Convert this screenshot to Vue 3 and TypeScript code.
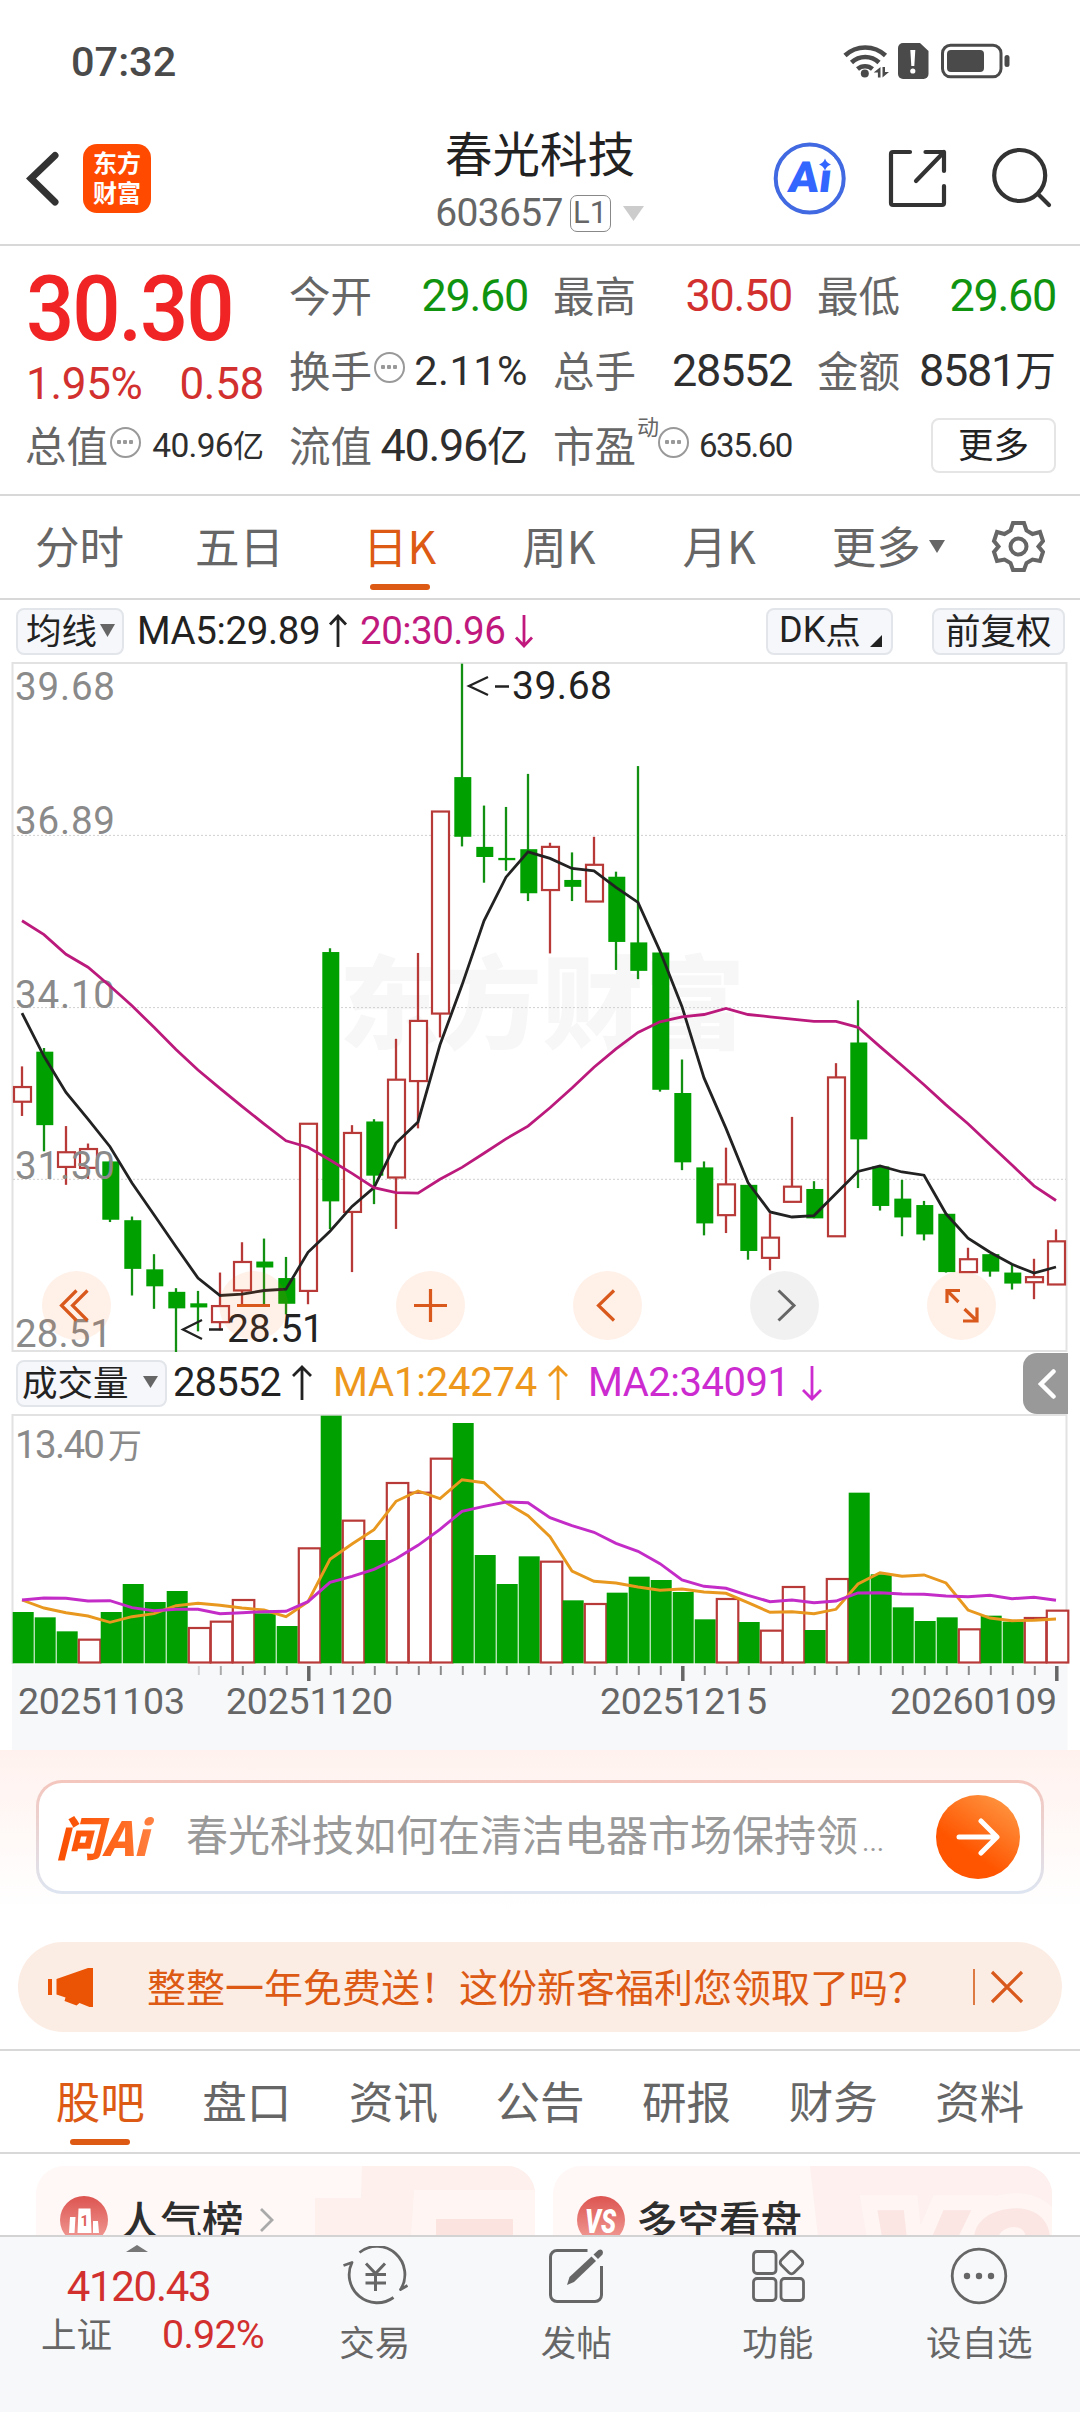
<script setup lang="ts">
type Candle = [kind: 'r' | 'g', high: number, top: number, bottom: number, low: number]

const STEP = 22
const FIRST = 22
const cx = (i: number): number => FIRST + i * STEP
const py = (v: number): number => 660 + v * 0.45918
const vy = (v: number): number => 1340 + v / 3

const candles: Candle[] = [
  ['r', 885, 930, 962, 993], ['g', 845, 853, 1013, 1070], ['r', 1015, 1072, 1104, 1143], ['r', 1053, 1065, 1106, 1130],
  ['g', 1090, 1092, 1219, 1224], ['g', 1212, 1220, 1326, 1384], ['g', 1294, 1327, 1364, 1413], ['g', 1368, 1376, 1412, 1507],
  ['g', 1374, 1401, 1410, 1462], ['r', 1334, 1407, 1442, 1460], ['r', 1268, 1311, 1373, 1403], ['g', 1260, 1310, 1323, 1403],
  ['g', 1300, 1346, 1402, 1425], ['r', 1010, 1010, 1374, 1403], ['g', 628, 636, 1179, 1239], ['r', 1013, 1030, 1202, 1333],
  ['g', 1000, 1005, 1123, 1185], ['r', 825, 914, 1127, 1239], ['r', 638, 786, 917, 1020], ['r', 330, 330, 770, 822],
  ['g', 8, 255, 385, 406], ['g', 317, 407, 429, 485], ['g', 320, 431, 436, 459], ['g', 248, 412, 508, 525],
  ['r', 398, 407, 501, 639], ['g', 419, 479, 494, 525], ['r', 385, 446, 526, 526], ['g', 461, 472, 614, 675],
  ['g', 231, 615, 677, 695], ['g', 637, 637, 936, 940], ['g', 870, 943, 1094, 1111], ['g', 1092, 1105, 1227, 1253],
  ['r', 1062, 1142, 1209, 1248], ['g', 1143, 1143, 1287, 1306], ['r', 1205, 1258, 1302, 1329], ['r', 995, 1147, 1180, 1180],
  ['g', 1135, 1152, 1216, 1216], ['r', 878, 909, 1255, 1255], ['g', 741, 833, 1044, 1150], ['g', 1100, 1103, 1189, 1199],
  ['g', 1132, 1173, 1214, 1255], ['g', 1178, 1187, 1251, 1264], ['g', 1206, 1206, 1333, 1334], ['r', 1280, 1305, 1333, 1333],
  ['g', 1294, 1294, 1332, 1343], ['g', 1315, 1334, 1358, 1371], ['r', 1304, 1344, 1355, 1392], ['r', 1240, 1266, 1360, 1360],
]

const ma5 = [769, 863, 942, 1000, 1060, 1139, 1208, 1278, 1346, 1384, 1381, 1373, 1370, 1290, 1244, 1190, 1149, 1052, 1006, 838, 708, 568, 473, 418, 432, 454, 459, 495, 528, 634, 755, 910, 1020, 1138, 1202, 1213, 1210, 1162, 1114, 1102, 1115, 1122, 1206, 1259, 1290, 1316, 1335, 1322]
const ma20 = [568, 598, 641, 669, 710, 753, 800, 848, 893, 933, 972, 1010, 1047, 1061, 1089, 1118, 1149, 1160, 1161, 1131, 1105, 1074, 1043, 1015, 975, 932, 887, 847, 811, 788, 777, 772, 759, 772, 777, 782, 787, 787, 800, 842, 883, 925, 969, 1010, 1055, 1100, 1145, 1177]
const volumes = [816, 832, 874, 899, 816, 732, 786, 753, 864, 845, 780, 820, 858, 625, 227, 542, 600, 429, 458, 356, 249, 645, 732, 649, 665, 781, 792, 758, 710, 720, 756, 838, 777, 846, 872, 741, 870, 717, 458, 703, 802, 843, 832, 868, 827, 845, 834, 812]
const vma1 = [780, 804, 818, 828, 847, 830, 821, 797, 790, 796, 804, 810, 830, 785, 658, 612, 569, 484, 453, 476, 419, 428, 488, 527, 590, 693, 724, 729, 741, 751, 747, 756, 760, 788, 817, 815, 821, 808, 732, 698, 709, 705, 729, 810, 834, 842, 841, 837]
const vma2 = [780, 774, 775, 783, 782, 803, 812, 808, 808, 821, 818, 815, 814, 785, 727, 709, 688, 656, 616, 568, 514, 499, 486, 488, 533, 557, 577, 610, 634, 671, 720, 739, 745, 766, 785, 780, 788, 783, 759, 758, 762, 763, 768, 770, 766, 776, 772, 781]

// Volume bars are coloured by the close-to-close change, so a few differ from their candle.
const flipped = [0, 2, 8]
const volDown = (i: number): boolean => (candles[i][0] === 'g') !== flipped.includes(i)

const line = (data: number[], f: (v: number) => number): string =>
  data.map((v, i) => `${cx(i)},${f(v).toFixed(1)}`).join(' ')

const priceLabels = [
  { t: '39.68', y: 700, w: 100 }, { t: '36.89', y: 834, w: 100 }, { t: '34.10', y: 1007.5, w: 100 },
  { t: '31.30', y: 1179, w: 100 }, { t: '28.51', y: 1347, w: 97 },
]
const gridLines = [835.4, 1007.6, 1179.3]
const ticks = Array.from({ length: 40 }, (_, k) => k + 8)
const isMajor = (i: number): boolean => i === 13 || i === 30 || i === 47
const dates = [
  { t: '20251103', x: 18 }, { t: '20251120', x: 226 }, { t: '20251215', x: 600 }, { t: '20260109', x: 890 },
]
const periods = ['分时', '五日', '日K', '周K', '月K', '更多']
const sections = ['股吧', '盘口', '资讯', '公告', '研报', '财务', '资料']
</script>

<template>
  <div class="screen">
    <div class="status">
      <span class="clock">07:32</span>
      <svg class="status-icons" width="170" height="40" viewBox="842 40 170 40">
        <g fill="none" stroke="#4a4a4a" stroke-width="4.6">
          <path d="M845 55.500a29.500 29.500 0 0 1 40.500 0" />
          <path d="M851.500 62.500a20 20 0 0 1 27.500 0" />
          <path d="M857.500 69a11.500 11.500 0 0 1 15 0" />
        </g>
        <circle cx="864.800" cy="73.500" r="4" fill="#4a4a4a" />
        <path d="M880.500 67v10.500h-2.600V72.500h-4.200zM882.500 77.500V67h2.500v5h4z" fill="#4a4a4a" />
        <path d="M903 43h17l8.500 8V74a5 5 0 0 1-5 5H903a5 5 0 0 1-5-5V48a5 5 0 0 1 5-5z" fill="#4a4a4a" />
        <path d="M910.300 50h5l-1 16h-3z" fill="#fff" />
        <circle cx="912.800" cy="71" r="2.600" fill="#fff" />
        <rect x="942.500" y="45.300" width="58.500" height="31.500" rx="8" fill="none" stroke="#4a4a4a" stroke-width="3" />
        <rect x="947" y="50" width="37" height="22" rx="4" fill="#4a4a4a" />
        <rect x="1004.500" y="55" width="5" height="12" rx="2.500" fill="#4a4a4a" />
      </svg>
    </div>

    <header class="header">
      <svg class="back" width="34" height="60" viewBox="26 149 34 60">
        <path d="M55 155.500L31 178.500L55 202" fill="none" stroke="#333" stroke-width="7" stroke-linecap="round" />
      </svg>
      <div class="brand"><span>东方</span><span>财富</span></div>
      <div class="title">
        <div class="name">春光科技</div>
        <div class="code">
          <span class="num">603657</span><span class="level">L1</span>
          <svg width="23" height="15" viewBox="0 0 23 15"><path d="M1 0h21L11.500 15z" fill="#ccc" /></svg>
        </div>
      </div>
      <svg class="tools" width="290" height="80" viewBox="770 139 290 80">
        <circle cx="808.700" cy="178.500" r="34" fill="none" stroke="#4169e1" stroke-width="4" />
        <g transform="translate(787 192) skewX(-7)">
          <text x="-1" y="0" class="ai-mark" textLength="43" lengthAdjust="spacingAndGlyphs">Ai</text>
        </g>
        <rect x="817" y="157" width="16" height="13.500" fill="#fff" />
        <path d="M824 158.500Q825.500 163 830 164.500Q825.500 166 824 170.500Q822.500 166 818 164.500Q822.500 163 824 158.500z" fill="#3366ff" />
        <g fill="none" stroke="#333" stroke-width="4.200" stroke-linecap="round" stroke-linejoin="round">
          <path d="M909 152H892a2 2 0 0 0-2 2V203a2 2 0 0 0 2 2H941a2 2 0 0 0 2-2V186" />
          <path d="M924.500 152H943V171M943 152L915 181" />
          <circle cx="1018.700" cy="175.500" r="25.500" />
          <path d="M1037 194L1048 205" />
        </g>
      </svg>
    </header>

    <section class="quote">
      <div class="col first">
        <div class="price">30.30</div>
        <div class="change"><span>1.95%</span><span>0.58</span></div>
        <div class="cell">
          <label>总值</label><i class="info"></i><span class="val small">40.96<b>亿</b></span>
        </div>
      </div>
      <div class="col">
        <div class="cell"><label>今开</label><span class="val green">29.60</span></div>
        <div class="cell"><label>换手</label><i class="info"></i><span class="val mid">2.11%</span></div>
        <div class="cell"><label>流值</label><span class="val">40.96<b>亿</b></span></div>
      </div>
      <div class="col">
        <div class="cell"><label>最高</label><span class="val red">30.50</span></div>
        <div class="cell"><label>总手</label><span class="val">28552</span></div>
        <div class="cell"><label>市盈</label><sup>动</sup><i class="info"></i><span class="val small pe">635.60</span></div>
      </div>
      <div class="col">
        <div class="cell"><label>最低</label><span class="val green">29.60</span></div>
        <div class="cell"><label>金额</label><span class="val">8581<b>万</b></span></div>
        <div class="cell"><span class="more">更多</span></div>
      </div>
    </section>

    <nav class="periods">
      <span v-for="(p, i) in periods" :key="p" class="period" :class="{ on: i === 2 }">{{ p }}</span>
      <svg class="tri" width="16" height="13" viewBox="0 0 16 13"><path d="M0 0h16L8 13z" fill="#666" /></svg>
      <svg class="gear" width="54" height="54" viewBox="991 520 54 54">
        <g fill="none" stroke="#666" stroke-width="4" stroke-linejoin="miter">
          <path d="M1013 524h11l2.500 7.500 6 3.500 7.500-2 3 9-4.500 5.500 4.500 5.500-3 9-7.500-1.500-6 3.500-2.500 7h-11l-2.500-7-6-3.500-7.500 1.500-3-9 4.500-5.500-4.500-5.500 3-9 7.500 2 6-3.500z" />
          <circle cx="1018.500" cy="547.500" r="8" />
        </g>
      </svg>
    </nav>

    <div class="indicator">
      <span class="chip ma-chip">均线<svg width="15" height="13" viewBox="0 0 15 13"><path d="M0 0h15L7.500 13z" fill="#666" /></svg></span>
      <span class="ind dark ma5">MA5:29.89</span>
      <svg width="20" height="34" viewBox="0 0 20 34"><path d="M10 33V2M2 10.500L10 2L18 10.500" class="arrow dark-s" /></svg>
      <span class="ind pink ma20">20:30.96</span>
      <svg width="20" height="34" viewBox="0 0 20 34"><path d="M10 1V32M2 23.500L10 32L18 23.500" class="arrow pink-s" /></svg>
      <span class="chip dk"><em>DK</em>点<svg width="12" height="12" viewBox="0 0 12 12"><path d="M12 0V12H0z" fill="#222" /></svg></span>
      <span class="chip fq">前复权</span>
    </div>

    <svg class="plot" width="1080" height="690" viewBox="0 662 1080 690">
      <text x="339" y="1041" class="watermark" textLength="406">东方财富</text>
      <rect x="12.500" y="663" width="1054" height="688" fill="none" stroke="#e2e2e2" stroke-width="2" />
      <line v-for="g in gridLines" :key="g" x1="13" x2="1066" :y1="g" :y2="g" stroke="#d0d0d0" stroke-width="1" stroke-dasharray="2 2" />
      <g v-for="(c, i) in candles" :key="i">
        <template v-if="c[0] === 'g'">
          <line :x1="cx(i)" :x2="cx(i)" :y1="py(c[1])" :y2="py(c[4])" stroke="#129012" stroke-width="2.300" />
          <rect :x="cx(i) - 7.700" :y="py(c[2])" width="17" :height="py(c[3]) - py(c[2])" fill="#00a000" />
        </template>
        <template v-else>
          <line :x1="cx(i)" :x2="cx(i)" :y1="py(c[1])" :y2="py(c[2])" stroke="#b83a38" stroke-width="2.300" />
          <line :x1="cx(i)" :x2="cx(i)" :y1="py(c[3])" :y2="py(c[4])" stroke="#b83a38" stroke-width="2.300" />
          <rect :x="cx(i) - 8" :y="py(c[2])" width="17" :height="py(c[3]) - py(c[2])" fill="#fff" stroke="#b83a38" stroke-width="2.200" />
        </template>
      </g>
      <text v-for="p in priceLabels" :key="p.t" x="15" :y="p.y" class="axis-text" :textLength="p.w">{{ p.t }}</text>
      <polyline :points="line(ma5, py)" fill="none" stroke="#222" stroke-width="2.800" />
      <polyline :points="line(ma20, py)" fill="none" stroke="#bb1a7c" stroke-width="2.800" />
      <g fill="none" stroke="#222" stroke-width="2.300">
        <path d="M488 677L469 686L488 695M495 686.500H509" />
        <path d="M202 1320L183 1329.500L202 1339M209 1329.500H223" />
      </g>
      <text x="512" y="698.500" class="mark-text" textLength="100">39.68</text>
      <text x="227" y="1342" class="mark-text" textLength="97">28.51</text>
      <g fill="#ff6a1a" fill-opacity="0.100">
        <circle cx="76.500" cy="1305.500" r="34.500" />
        <circle cx="253.700" cy="1305.500" r="34.500" />
        <circle cx="430.500" cy="1305.500" r="34.500" />
        <circle cx="607.500" cy="1305.500" r="34.500" />
        <circle cx="961.500" cy="1305.500" r="34.500" />
      </g>
      <circle cx="784.500" cy="1305.500" r="34.500" fill="#000" fill-opacity="0.055" />
      <g fill="none" stroke="#d9591c" stroke-width="3.200">
        <path d="M76.500 1290.500L61.500 1305.500L76.500 1320.500M87.500 1290.500L72.500 1305.500L87.500 1320.500" />
        <path d="M237 1305.500H270M414 1305.500H447M430.500 1289V1322" />
        <path d="M614 1290.500L598.500 1305.500L614 1320.500" />
        <path d="M947 1303V1290.500H960M947.500 1291L958.500 1302M977 1307.500V1321H963M977 1321L964.500 1309" />
      </g>
      <path d="M778.500 1290.500L794 1305.500L778.500 1320.500" fill="none" stroke="#666" stroke-width="3" />
    </svg>

    <div class="indicator vol-head">
      <span class="chip vol-chip">成交量<svg width="15" height="12" viewBox="0 0 15 12"><path d="M0 0h15L7.500 12z" fill="#666" /></svg></span>
      <span class="ind dark v0">28552</span>
      <svg width="22" height="36" viewBox="0 0 22 36"><path d="M11 35V2M2 11L11 2L20 11" class="arrow dark-s" /></svg>
      <span class="ind orange v1">MA1:24274</span>
      <svg width="22" height="36" viewBox="0 0 22 36"><path d="M11 35V2M2 11L11 2L20 11" class="arrow orange-s" /></svg>
      <span class="ind violet v2">MA2:34091</span>
      <svg width="22" height="36" viewBox="0 0 22 36"><path d="M11 1V34M2 25L11 34L20 25" class="arrow violet-s" /></svg>
      <span class="fold"><svg width="18" height="30" viewBox="0 0 18 30"><path d="M15.500 2.500L3 15L15.500 27.500" fill="none" stroke="#fff" stroke-width="4.500" stroke-linecap="round" /></svg></span>
    </div>

    <svg class="plot" width="1080" height="336" viewBox="0 1414 1080 336">
      <rect x="12" y="1664.500" width="1055.500" height="86" fill="#f7f8fa" />
      <path d="M12.500 1664V1415H1066.500V1664" fill="none" stroke="#e2e2e2" stroke-width="2" />
      <template v-for="(v, i) in volumes" :key="i">
        <rect v-if="volDown(i)" :x="cx(i) - 9.300" :y="vy(v)" width="21" :height="1663.300 - vy(v)" fill="#00a000" />
        <rect v-else :x="cx(i) - 9.200" :y="vy(v)" width="21.500" :height="1662.500 - vy(v)" fill="#fff" stroke="#b83a38" stroke-width="2.200" />
      </template>
      <polyline :points="line(vma1, vy)" fill="none" stroke="#e8981e" stroke-width="2.900" />
      <polyline :points="line(vma2, vy)" fill="none" stroke="#c42cc8" stroke-width="2.900" />
      <text x="15" y="1457.500" class="axis-text" textLength="90">13.40</text>
      <text x="108" y="1457.500" class="axis-cjk">万</text>
      <line
        v-for="i in ticks" :key="i" :x1="cx(i) + 0.800" :x2="cx(i) + 0.800" y1="1666" :y2="isMajor(i) ? 1681 : 1675"
        :stroke="isMajor(i) ? '#666' : '#8a8a8a'" :stroke-width="isMajor(i) ? 3.500 : 2" :opacity="i === 8 ? 0.350 : i === 9 ? 0.700 : 1"
      />
      <text v-for="d in dates" :key="d.t" :x="d.x" y="1713.500" class="date-text" textLength="167">{{ d.t }}</text>
    </svg>

    <section class="ask">
      <div class="ask-box">
        <span class="ask-logo">问Ai</span>
        <span class="ask-text">春光科技如何在清洁电器市场保持领<i>...</i></span>
        <span class="go"><svg width="44" height="44" viewBox="0 0 44 44"><path d="M3 22H40M25 6L41 22L25 38" fill="none" stroke="#fff" stroke-width="5" stroke-linecap="round" stroke-linejoin="round" /></svg></span>
      </div>
    </section>

    <div class="promo">
      <svg width="46" height="40" viewBox="48 1967 46 40"><path d="M48 1979h4v16h-4zM56.500 1979L88 1968h5v39h-3.500l-10-4-3 2.500-12-4.500 1-3.500-9-3z" fill="#ea5404" /></svg>
      <span class="promo-text">整整一年免费送！这份新客福利您领取了吗？</span>
      <i class="bar"></i>
      <svg class="close" width="34" height="34" viewBox="0 0 34 34"><path d="M2 2L32 32M32 2L2 32" stroke="#d9591c" stroke-width="3.200" /></svg>
    </div>

    <nav class="sections">
      <span v-for="(s, i) in sections" :key="s" class="section-tab" :class="{ on: i === 0 }">{{ s }}</span>
    </nav>

    <div class="cards">
      <div class="card">
        <svg class="deco" width="500" height="70" viewBox="36 2166 500 70">
          <path d="M362 2166H536V2236H315V2198H361z" fill="#fdf0ed" />
          <path d="M414 2190H536L540 2236H411z" fill="#fff5f2" />
          <path d="M536 2166V2236H540L536.500 2190z" fill="#fdf0ed" />
          <rect x="436" y="2219" width="77" height="20" fill="#fbe4e0" />
        </svg>
        <svg class="badge" width="48" height="48" viewBox="0 0 48 48">
          <defs><linearGradient id="coral" x1="0" y1="0" x2="0" y2="1"><stop offset="0" stop-color="#dc5450" /><stop offset="1" stop-color="#f3a19b" /></linearGradient></defs>
          <circle cx="24" cy="24" r="24" fill="url(#coral)" />
          <path d="M10 21h5.500l-1 16H9zM18.500 12.500h12l1 24.500h-14zM33 25h5l1 12h-6z" fill="#fff" />
          <text x="20.500" y="29.500" font-size="14" font-weight="700" font-family="Roboto, sans-serif" fill="#e0625c">1</text>
        </svg>
        <span class="card-title">人气榜</span>
        <svg class="chev" width="16" height="26" viewBox="0 0 16 26"><path d="M2 2L13 13L2 24" fill="none" stroke="#aaa" stroke-width="2.800" /></svg>
      </div>
      <div class="card">
        <svg class="deco" width="500" height="70" viewBox="553 2166 500 70">
          <path d="M810 2166H1053V2236H818z" fill="#fdf0ee" />
          <text x="868" y="2313" class="vs-shadow">VS</text>
        </svg>
        <svg class="badge" width="48" height="48" viewBox="0 0 48 48">
          <circle cx="24" cy="24" r="24" fill="url(#coral)" />
          <text x="8" y="36.500" class="vs" textLength="31" lengthAdjust="spacingAndGlyphs">VS</text>
        </svg>
        <span class="card-title">多空看盘</span>
      </div>
    </div>

    <footer class="footer">
      <div class="index">
        <svg width="22" height="7" viewBox="0 0 22 7"><path d="M0 7L11 0L22 7z" fill="#777" /></svg>
        <div class="index-value">4120.43</div>
        <div class="index-row"><span>上证</span><b>0.92%</b></div>
      </div>
      <div class="item">
        <svg width="68" height="60" viewBox="341 2246 68 60">
          <g fill="none" stroke="#666" stroke-width="2.800">
            <path d="M359.500 2252.500A28 28 0 0 1 400.500 2289.500L407.500 2285.500" stroke-linejoin="round" />
            <path d="M393.500 2297.500A28 28 0 0 1 352 2262.500L343.500 2265.500" stroke-linejoin="round" />
            <path d="M366 2263.500L375.500 2273.500L385 2263.500M365.500 2274.500H386M365.500 2283H386M375.500 2273V2291" stroke-width="3" />
          </g>
        </svg>
        <span>交易</span>
      </div>
      <div class="item">
        <svg width="60" height="60" viewBox="547 2246 60 60">
          <path d="M588.500 2250.500H558a6.500 6.500 0 0 0-6.500 6.500V2295a6.500 6.500 0 0 0 6.500 6.500H596a6.500 6.500 0 0 0 6.500-6.500V2266" fill="none" stroke="#666" stroke-width="3" />
          <path d="M568 2285L570.500 2277L592.500 2256.500L597 2261L575 2282z" fill="#666" />
          <path d="M594.500 2254.500L599.500 2250Q603 2248.500 604 2252L603.500 2254.500L599 2259z" fill="#666" />
        </svg>
        <span>发帖</span>
      </div>
      <div class="item">
        <svg width="60" height="60" viewBox="748 2246 60 60">
          <g fill="none" stroke="#666" stroke-width="2.800">
            <rect x="753.500" y="2251.500" width="22.500" height="22" rx="3.500" />
            <rect x="753.500" y="2278.500" width="22.500" height="22" rx="3.500" />
            <rect x="781" y="2278.500" width="22.500" height="22" rx="3.500" />
            <rect x="782.500" y="2253.500" width="18" height="18" rx="3.500" transform="rotate(45 791.500 2262.500)" />
          </g>
        </svg>
        <span>功能</span>
      </div>
      <div class="item">
        <svg width="60" height="60" viewBox="949 2246 60 60">
          <circle cx="979" cy="2276" r="26.800" fill="none" stroke="#666" stroke-width="2.800" />
          <circle cx="967" cy="2276" r="3.200" fill="#666" /><circle cx="979" cy="2276" r="3.200" fill="#666" /><circle cx="991" cy="2276" r="3.200" fill="#666" />
        </svg>
        <span>设自选</span>
      </div>
    </footer>
  </div>
</template>

<style>
html, body { margin: 0; background: #fff; }
</style>

<style scoped>
.screen { width: 1080px; height: 2412px; overflow: hidden; display: flex; flex-direction: column; background: #fff; color: #222; font-family: "Noto Sans CJK SC", sans-serif; white-space: nowrap; }
.screen > * { flex: none; box-sizing: border-box; }
svg { display: block; flex: none; }
i, em, b { font-style: normal; font-weight: 400; }

.status { height: 80px; display: flex; justify-content: space-between; align-items: flex-start; padding: 40px 68px 0 71px; }
.clock { font: 500 41.500px/44px Roboto, sans-serif; letter-spacing: 0; color: #4a4a4a; }

.header { height: 166px; display: flex; align-items: flex-start; border-bottom: 2px solid #d8d8d8; }
.back { margin: 69px 0 0 26px; }
.brand { margin: 64px 0 0 23px; width: 68px; height: 69px; border-radius: 14px; background: #ff4a00; color: #fff; display: flex; flex-direction: column; align-items: center; justify-content: center; font-size: 24px; font-weight: 700; line-height: 30px; box-sizing: border-box; padding-bottom: 3px; }
.title { width: 380px; margin: 40px 0 0 199px; display: flex; flex-direction: column; align-items: center; }
.name { font-size: 47.500px; line-height: 64px; }
.code { display: flex; align-items: center; height: 44px; margin-top: 7px; color: #666; font: 400 39px/44px Roboto, sans-serif; }
.code .num { letter-spacing: -0.700px; }
.level { box-sizing: border-box; width: 41px; height: 37px; margin: 0 11px 0 7px; border: 1.500px solid #888; border-radius: 7px; font: 400 31px/34px Roboto, sans-serif; text-align: center; }
.tools { margin: 59px 0 0 41px; }
.ai-mark { font: 900 43px Roboto, sans-serif; fill: #3366ff; }

.quote { height: 250px; display: flex; gap: 26px; padding: 12px 24px 0 26px; border-bottom: 2px solid #d8d8d8; }
.col { width: 238px; }
.cell { height: 75px; display: flex; align-items: center; }
.cell label { margin: -3px 1px 0 -1px; font-size: 41.500px; line-height: 60px; color: #666; }
.cell sup { font-size: 22px; line-height: 24px; color: #666; align-self: flex-start; margin: 5px -2px 0 0; }
.val { margin-left: auto; margin-top: 1px; font: 400 45px/60px Roboto, "Noto Sans CJK SC", sans-serif; letter-spacing: -1.300px; color: #2e2e2e; }
.val b { font-size: 41px; letter-spacing: 0; }
.val.small { font-size: 33.500px; letter-spacing: -0.700px; }
.val.small b { font-size: 31px; }
.val.small.pe { font-size: 33px; letter-spacing: -1.400px; }
.val.mid { font-size: 41.500px; letter-spacing: 0.500px; }
.green { color: #109410; }
.red { color: #d2302f; }
.info { box-sizing: border-box; width: 31px; height: 31px; margin: -6px 0 0 1px; border: 2.500px solid #999; border-radius: 50%; background: radial-gradient(circle at 7px 13px, #999 2px, transparent 2.500px), radial-gradient(circle at 13px 13px, #999 2px, transparent 2.500px), radial-gradient(circle at 19px 13px, #999 2px, transparent 2.500px); }
.price { height: 89px; margin-top: 2px; font: 500 90px/99px Roboto, sans-serif; letter-spacing: -2.200px; color: #f02424; transform: scaleX(0.945); transform-origin: 0 50%; }
.change { height: 59px; display: flex; justify-content: space-between; align-items: center; font: 400 44px/56px Roboto, sans-serif; letter-spacing: -0.300px; color: #d2302f; padding-top: 10px; box-sizing: border-box; }
.more { box-sizing: border-box; width: 125px; height: 55px; margin-left: auto; border: 2px solid #e5e5e5; border-radius: 8px; font-size: 35.500px; line-height: 46px; text-align: center; color: #222; }

.periods { height: 104px; display: flex; align-items: center; padding: 0 0 2px 35px; border-bottom: 2px solid #d8d8d8; }
.period { font-size: 44.500px; line-height: 100px; height: 102px; color: #666; position: relative; margin-right: 71px; }
.period:nth-child(2) { margin-right: 79px; }
.period:nth-child(3) { margin-right: 86px; }
.period:nth-child(4) { margin-right: 87px; }
.period:nth-child(5) { margin-right: 76px; }
.period:nth-child(6) { margin-right: 8px; }
.on { color: #dd5a14; }
.period.on::after, .section-tab.on::after { content: ""; position: absolute; left: 50%; bottom: 7px; width: 60px; height: 6px; margin-left: -30px; border-radius: 3px; background: #dd5a14; }
.gear { margin-left: auto; margin-right: 35px; }

.indicator { height: 62px; display: flex; align-items: center; padding-left: 16px; }
.chip { box-sizing: border-box; height: 47px; display: flex; align-items: center; border: 2px solid #e2e5ea; border-radius: 8px; background: #f6f7fa; font-size: 35.500px; line-height: 38px; padding-bottom: 5px; color: #222; }
.chip em { font: 400 36px/38px Roboto, sans-serif; margin-top: 3px; }
.chip svg { margin-top: 3px; }
.ma-chip { width: 108px; padding-left: 8px; gap: 3px; }
.ind { font: 400 38.500px/50px Roboto, sans-serif; }
.dark { color: #222; } .pink { color: #c0187c; } .orange { color: #ed981c; } .violet { color: #cc2bd0; }
.arrow { fill: none; stroke-width: 2.800; }
.dark-s { stroke: #222; } .pink-s { stroke: #c0187c; } .orange-s { stroke: #ed981c; } .violet-s { stroke: #cc2bd0; }
.ma5 { margin-left: 13px; width: 191px; letter-spacing: -0.400px; }
.ma20 { margin-left: 12px; width: 154px; letter-spacing: -0.500px; }
.dk { width: 127px; margin-left: 232px; padding-left: 11px; }
.dk svg { margin: 24px 0 0 9px; }
.fq { width: 133px; margin-left: 39px; padding-left: 11px; }

.watermark { font: 900 101px "Noto Sans CJK SC", sans-serif; fill: #f7f7f7; }
.axis-text { font: 400 38.500px Roboto, sans-serif; fill: #8a8a8a; }
.axis-cjk { font: 400 34px "Noto Sans CJK SC", sans-serif; fill: #8a8a8a; }
.mark-text { font: 400 39px Roboto, sans-serif; fill: #222; }
.date-text { font: 400 37.500px Roboto, sans-serif; fill: #666; }

.vol-chip { width: 151px; padding-left: 4px; justify-content: space-between; padding-right: 7px; }
.vol-head .ind { font-size: 40px; }
.v0 { margin-left: 6px; width: 118px; letter-spacing: -0.900px; }
.v1 { margin-left: 20px; width: 214px; letter-spacing: -0.200px; }
.v2 { margin-left: 19px; width: 213px; letter-spacing: -0.500px; }
.fold { width: 45px; height: 61px; margin: 1px 12px 0 auto; border-radius: 14px 0 0 14px; background: #999; display: flex; align-items: center; justify-content: center; padding-left: 2px; box-sizing: border-box; }

.ask { height: 192px; padding: 30px 36px 0; background: linear-gradient(#fff2ee, #fff 160px); }
.ask-box { box-sizing: border-box; width: 1008px; height: 114px; border: 3px solid transparent; border-radius: 26px; background: linear-gradient(#fff, #fff) padding-box, linear-gradient(#f4c6bd, #dde5f1) border-box; display: flex; align-items: center; }
.ask-logo { width: 110px; margin-left: 17px; margin-top: -3px; font-size: 47px; font-weight: 900; font-style: italic; line-height: 60px; letter-spacing: -0.500px; color: transparent; background: linear-gradient(90deg, #f94d00, #ff6a20 60%, #ff8a50); background-clip: text; }
.ask-text { margin-left: 20px; font-size: 42px; line-height: 60px; color: #999; }
.ask-text i { font: 400 28px/60px Roboto, sans-serif; margin-left: 4px; }
.go { width: 84px; height: 84px; margin: 0 21px 0 auto; border-radius: 50%; background: linear-gradient(215deg, #ff9440 10%, #ff5500 65%); display: flex; align-items: center; justify-content: center; }

.promo { width: 1044px; height: 90px; margin: 0 18px 17px; border-radius: 45px; background: #fcede4; display: flex; align-items: center; padding-left: 30px; }
.promo-text { margin: -5px 0 0 53px; width: 826px; font-size: 39px; line-height: 60px; color: #dd5a14; }
.bar { width: 2px; height: 36px; background: #dd7a44; }
.close { margin-left: 15px; }

.sections { height: 105px; display: flex; padding: 0 27px; border-top: 2px solid #d8d8d8; border-bottom: 2px solid #d8d8d8; }
.section-tab { position: relative; flex: 1; text-align: center; font-size: 44.500px; line-height: 97px; color: #666; }
.section-tab.on { color: #dd5a14; }

.cards { height: 81px; padding: 12px 28px 0 36px; display: flex; gap: 18px; overflow: hidden; }
.card { position: relative; width: 499px; height: 120px; border-radius: 28px; overflow: hidden; background: #fff8f6; display: flex; align-items: flex-start; }
.deco { position: absolute; left: 0; top: 0; }
.badge { position: relative; margin: 30px 11px 0 24px; }
.card-title { position: relative; margin-top: 23px; font-size: 41.500px; line-height: 60px; font-weight: 500; color: #2e2e2e; }
.chev { position: relative; margin: 41px 0 0 15px; }
.vs { font: italic 900 33px Roboto, sans-serif; fill: #fff; }
.vs-shadow { font: italic 900 145px Roboto, sans-serif; fill: #fbe6e3; stroke: #fff5f3; stroke-width: 30px; paint-order: stroke; }

.footer { height: 177px; border-top: 2px solid #d3d3d3; background: #f7f8fa; display: flex; }
.index { width: 274px; display: flex; flex-direction: column; align-items: center; padding-top: 8px; }
.index-value { margin: 14px 0 0 3px; font: 400 42px/42px Roboto, sans-serif; letter-spacing: -1.300px; color: #d2302f; }
.index-row { display: flex; align-items: center; width: 223px; margin: 2px 0 0 31px; justify-content: space-between; }
.index-row span { font-size: 35.500px; line-height: 48px; margin-top: -4px; color: #666; }
.index-row b { font: 400 39.500px/50px Roboto, sans-serif; letter-spacing: -0.800px; color: #d2302f; }
.item { width: 201.500px; display: flex; flex-direction: column; align-items: center; padding-top: 9px; }
.item span { margin-top: 9px; font-size: 35.500px; line-height: 52px; color: #666; }
</style>
